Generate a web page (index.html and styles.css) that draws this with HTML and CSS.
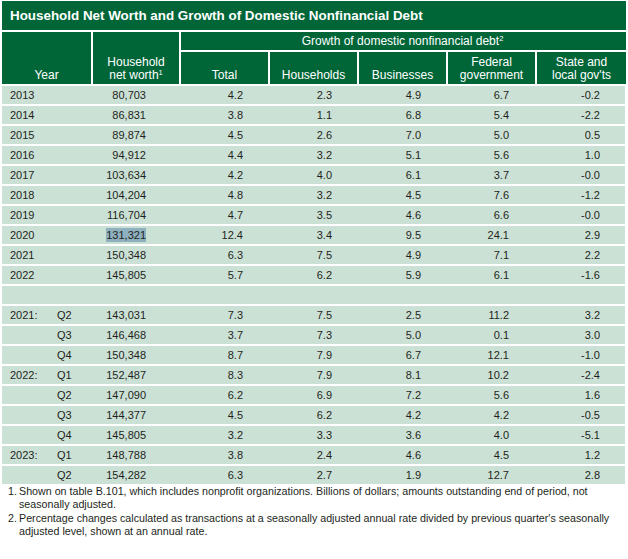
FILE: index.html
```html
<!DOCTYPE html>
<html>
<head>
<meta charset="utf-8">
<link rel="stylesheet" href="styles.css">
</head>
<body>
<div class="wrap">
  <div class="title">Household Net Worth and Growth of Domestic Nonfinancial Debt</div>
  <div class="head">
    <div class="hc year-h"><span>Year</span></div>
    <div class="hc nw-h"><span>Household<br>net worth<sup>1</sup></span></div>
    <div class="hc growth-h"><span>Growth of domestic nonfinancial debt<sup>2</sup></span></div>
    <div class="hc"><span>Total</span></div>
    <div class="hc"><span>Households</span></div>
    <div class="hc"><span>Businesses</span></div>
    <div class="hc"><span>Federal<br>government</span></div>
    <div class="hc"><span>State and<br>local gov'ts</span></div>
  </div>
  <div class="rows">
    <div class="row"><div class="c y"><span class="yr">2013</span></div><div class="c nw">80,703</div><div class="c t">4.2</div><div class="c h">2.3</div><div class="c b">4.9</div><div class="c f">6.7</div><div class="c s">-0.2</div></div>
    <div class="row"><div class="c y"><span class="yr">2014</span></div><div class="c nw">86,831</div><div class="c t">3.8</div><div class="c h">1.1</div><div class="c b">6.8</div><div class="c f">5.4</div><div class="c s">-2.2</div></div>
    <div class="row"><div class="c y"><span class="yr">2015</span></div><div class="c nw">89,874</div><div class="c t">4.5</div><div class="c h">2.6</div><div class="c b">7.0</div><div class="c f">5.0</div><div class="c s">0.5</div></div>
    <div class="row"><div class="c y"><span class="yr">2016</span></div><div class="c nw">94,912</div><div class="c t">4.4</div><div class="c h">3.2</div><div class="c b">5.1</div><div class="c f">5.6</div><div class="c s">1.0</div></div>
    <div class="row"><div class="c y"><span class="yr">2017</span></div><div class="c nw">103,634</div><div class="c t">4.2</div><div class="c h">4.0</div><div class="c b">6.1</div><div class="c f">3.7</div><div class="c s">-0.0</div></div>
    <div class="row"><div class="c y"><span class="yr">2018</span></div><div class="c nw">104,204</div><div class="c t">4.8</div><div class="c h">3.2</div><div class="c b">4.5</div><div class="c f">7.6</div><div class="c s">-1.2</div></div>
    <div class="row"><div class="c y"><span class="yr">2019</span></div><div class="c nw">116,704</div><div class="c t">4.7</div><div class="c h">3.5</div><div class="c b">4.6</div><div class="c f">6.6</div><div class="c s">-0.0</div></div>
    <div class="row"><div class="c y"><span class="yr">2020</span></div><div class="c nw"><span class="sel">131,321</span></div><div class="c t">12.4</div><div class="c h">3.4</div><div class="c b">9.5</div><div class="c f">24.1</div><div class="c s">2.9</div></div>
    <div class="row"><div class="c y"><span class="yr">2021</span></div><div class="c nw">150,348</div><div class="c t">6.3</div><div class="c h">7.5</div><div class="c b">4.9</div><div class="c f">7.1</div><div class="c s">2.2</div></div>
    <div class="row"><div class="c y"><span class="yr">2022</span></div><div class="c nw">145,805</div><div class="c t">5.7</div><div class="c h">6.2</div><div class="c b">5.9</div><div class="c f">6.1</div><div class="c s">-1.6</div></div>
    <div class="row blank"></div>
    <div class="row"><div class="c y"><span class="yr">2021:</span><span>Q2</span></div><div class="c nw">143,031</div><div class="c t">7.3</div><div class="c h">7.5</div><div class="c b">2.5</div><div class="c f">11.2</div><div class="c s">3.2</div></div>
    <div class="row"><div class="c y"><span class="yr"></span><span>Q3</span></div><div class="c nw">146,468</div><div class="c t">3.7</div><div class="c h">7.3</div><div class="c b">5.0</div><div class="c f">0.1</div><div class="c s">3.0</div></div>
    <div class="row"><div class="c y"><span class="yr"></span><span>Q4</span></div><div class="c nw">150,348</div><div class="c t">8.7</div><div class="c h">7.9</div><div class="c b">6.7</div><div class="c f">12.1</div><div class="c s">-1.0</div></div>
    <div class="row"><div class="c y"><span class="yr">2022:</span><span>Q1</span></div><div class="c nw">152,487</div><div class="c t">8.3</div><div class="c h">7.9</div><div class="c b">8.1</div><div class="c f">10.2</div><div class="c s">-2.4</div></div>
    <div class="row"><div class="c y"><span class="yr"></span><span>Q2</span></div><div class="c nw">147,090</div><div class="c t">6.2</div><div class="c h">6.9</div><div class="c b">7.2</div><div class="c f">5.6</div><div class="c s">1.6</div></div>
    <div class="row"><div class="c y"><span class="yr"></span><span>Q3</span></div><div class="c nw">144,377</div><div class="c t">4.5</div><div class="c h">6.2</div><div class="c b">4.2</div><div class="c f">4.2</div><div class="c s">-0.5</div></div>
    <div class="row"><div class="c y"><span class="yr"></span><span>Q4</span></div><div class="c nw">145,805</div><div class="c t">3.2</div><div class="c h">3.3</div><div class="c b">3.6</div><div class="c f">4.0</div><div class="c s">-5.1</div></div>
    <div class="row"><div class="c y"><span class="yr">2023:</span><span>Q1</span></div><div class="c nw">148,788</div><div class="c t">3.8</div><div class="c h">2.4</div><div class="c b">4.6</div><div class="c f">4.5</div><div class="c s">1.2</div></div>
    <div class="row"><div class="c y"><span class="yr"></span><span>Q2</span></div><div class="c nw">154,282</div><div class="c t">6.3</div><div class="c h">2.7</div><div class="c b">1.9</div><div class="c f">12.7</div><div class="c s">2.8</div></div>
  </div>
  <div class="notes">
    <div class="note"><span class="num">1.</span><span class="txt">Shown on table B.101, which includes nonprofit organizations. Billions of dollars; amounts outstanding end of period, not<br>seasonally adjusted.</span></div>
    <div class="note"><span class="num">2.</span><span class="txt">Percentage changes calculated as transactions at a seasonally adjusted annual rate divided by previous quarter's seasonally<br>adjusted level, shown at an annual rate.</span></div>
  </div>
</div>
</body>
</html>
```

FILE: styles.css
```css
html, body {
  margin: 0;
  padding: 0;
  background: #ffffff;
}

body {
  font-family: "Liberation Sans", Arial, sans-serif;
  color: #231f20;
}

.wrap {
  width: 624px;
  margin: 1px 0 0 2px;
}

.title {
  height: 29px;
  background: #006638;
  color: #ffffff;
  font-weight: bold;
  font-size: 13.4px;
  padding-left: 8px;
  display: flex;
  align-items: center;
}

.head {
  margin-top: 2px;
  display: grid;
  grid-template-columns: 89px 86px 87px 87px 87px 87px 89px;
  grid-template-rows: 18px 32px;
  gap: 2px;
}

.hc {
  background: #006638;
  color: #ffffff;
  font-size: 12px;
  line-height: 12.5px;
  text-align: center;
  display: flex;
  align-items: flex-end;
  justify-content: center;
  padding-bottom: 3px;
}

.hc sup {
  font-size: 7.5px;
  line-height: 0;
  vertical-align: 4px;
}

.year-h {
  grid-row: 1 / 3;
  grid-column: 1;
}

.nw-h {
  grid-row: 1 / 3;
  grid-column: 2;
}

.growth-h {
  grid-row: 1;
  grid-column: 3 / 8;
  align-items: center;
  padding-bottom: 0;
  padding-right: 2px;
}

.rows {
  margin-top: 2px;
  display: flex;
  flex-direction: column;
  gap: 2px;
}

.row {
  height: 18px;
  width: 623px;
  background: #cce1d6;
  display: grid;
  grid-template-columns: 89px 86px 87px 87px 87px 87px 89px;
  column-gap: 2px;
  font-size: 11px;
  align-items: center;
}

.c {
  text-align: right;
  line-height: 18px;
}

.y {
  text-align: left;
  padding-left: 8px;
  display: flex;
}

.yr {
  width: 47px;
}

.nw { padding-right: 33px; }
.t { padding-right: 25px; }
.h { padding-right: 25px; }
.b { padding-right: 25px; }
.f { padding-right: 26px; }
.s { padding-right: 26px; }

.sel {
  background: #8fb1bf;
  padding: 1px 0;
}

.notes {
  margin-top: 1px;
  font-size: 10.7px;
  line-height: 13.4px;
  color: #231f20;
  white-space: nowrap;
}

.note {
  display: flex;
  padding-left: 6px;
}

.num {
  width: 11px;
  flex: none;
}
```
